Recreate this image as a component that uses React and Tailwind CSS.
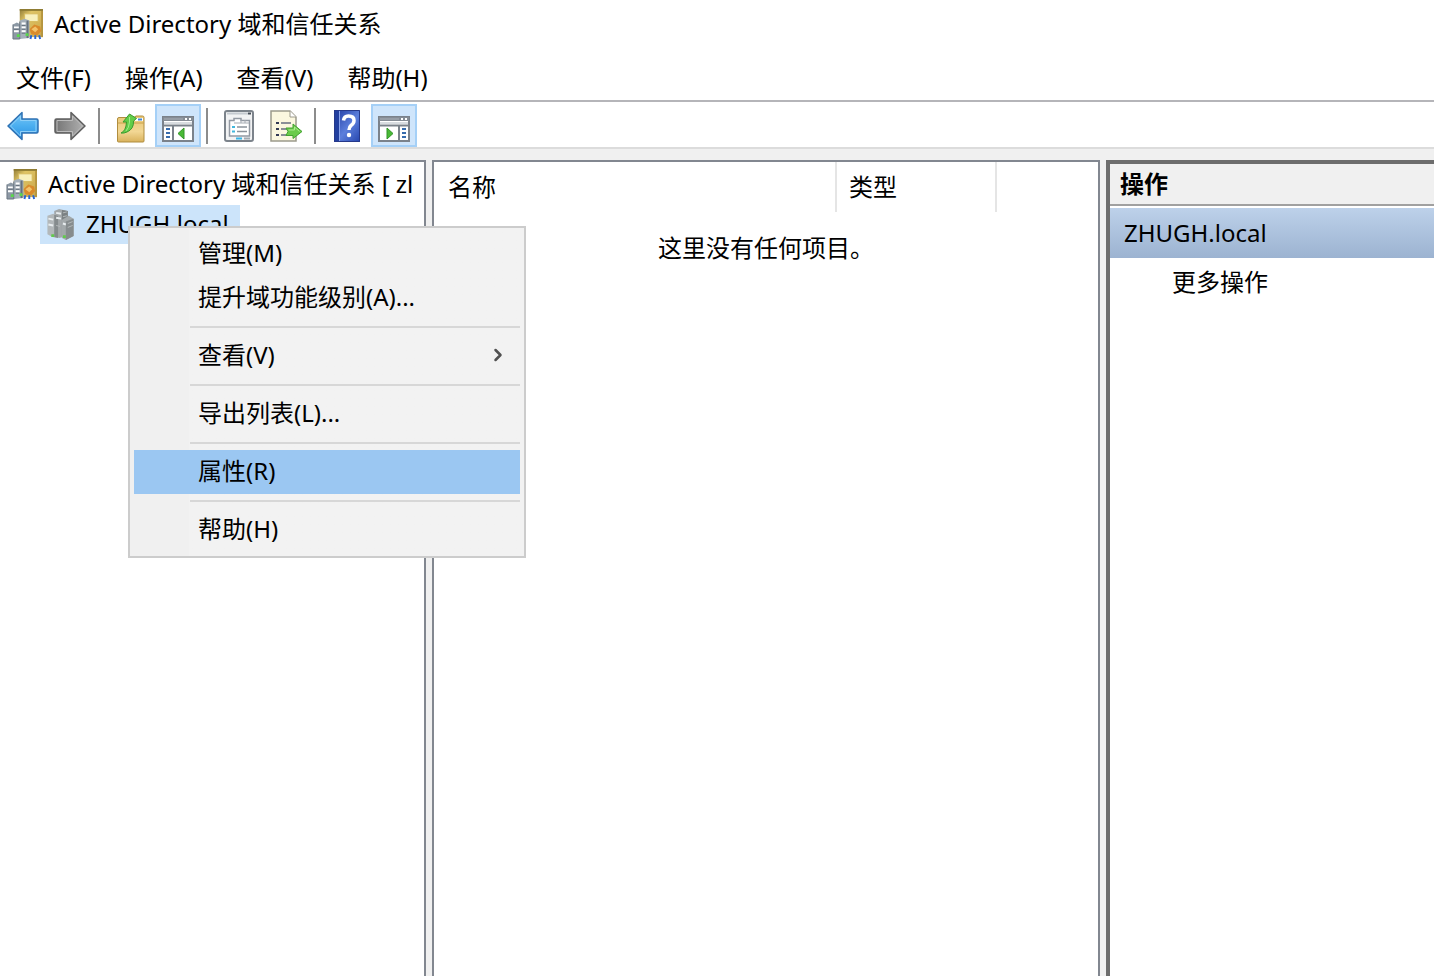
import { ChevronRight } from 'lucide-react';
import clsx from 'clsx';

const menus = ['文件(F)', '操作(A)', '查看(V)', '帮助(H)'];

const contextItems = [
    { label: '管理(M)' },
    { label: '提升域功能级别(A)...' },
    { separator: true },
    { label: '查看(V)', submenu: true },
    { separator: true },
    { label: '导出列表(L)...' },
    { separator: true },
    { label: '属性(R)', active: true },
    { separator: true },
    { label: '帮助(H)' },
];

function DirectoryIcon() {
    return (
        <svg viewBox="0 0 33 33" className="size-8 shrink-0" aria-hidden="true">
            <defs>
                <linearGradient id="book" x1="0" y1="0" x2="1" y2="1">
                    <stop offset="0" stopColor="#8f7a35" />
                    <stop offset="0.3" stopColor="#dfc465" />
                    <stop offset="1" stopColor="#c9a548" />
                </linearGradient>
            </defs>
            <path d="M8 1H32V30H8Z" fill="url(#book)" />
            <path d="M8 1H32V3H8Z" fill="#8f7c33" />
            <path d="M30 3h2v27h-2Z" fill="#b5953f" />
            <path d="M13 6h14v8H13Z" fill="#f8f0bd" stroke="#d6ba5c" />
            <path d="M18 22l5-5 6 2 1 5-4 4-6-1z" fill="#d98a2b" />
            <path d="M20 22l4-3 3 3-3 3z" fill="#f2c26a" />
            <path d="M20 28l-1 4M24 28v4M28 28l1 4" fill="none" stroke="#2563d4" strokeWidth="2" />
            <path d="M1 17l4-2 4 2v15H1z" fill="#8d99a5" />
            <path d="M8 13l5-2 5 2v18l-10 1z" fill="#a4afb9" />
            <path d="M16 13v18" stroke="#66727e" strokeWidth="2" />
            <path d="M2 20h5M2 24h5M10 16h4M10 20h4M10 24h4" stroke="#fff" strokeWidth="2" />
            <path d="M2 22h5M10 18h4M10 22h4M10 26h4" stroke="#65717d" />
            <path d="M1 17v15h7v-18" fill="none" stroke="#68747f" />
            <path d="M5 27h3v3H5zM14 26h3v3h-3z" fill="#59d84b" />
        </svg>
    );
}

function DomainIcon() {
    return (
        <svg viewBox="0 0 30 33" className="h-8 w-[30px] shrink-0" aria-hidden="true">
            <path d="M8 3l5-2 9 2v26l-9 2-5-3z" fill="#a3a8aa" />
            <path d="M16 2l6 1v26h-6z" fill="#7b8183" />
            <path d="M1 8l6-2 5 2v23l-6-1-5-3z" fill="#b3b8ba" />
            <path d="M8 7l4 1v23l-4-1z" fill="#858b8d" />
            <path d="M16 12l7-4 5 3v18l-8 4-4-2z" fill="#a3a9ab" />
            <path d="M20 14l8-3v18l-8 4z" fill="#868c8e" />
            <path d="M10 5l5 1M10 10l5 1M2 11l5 1M2 17l5 1M17 16l3 1" stroke="#e8edef" strokeWidth="2" />
            <path d="M17 5l4-1M17 9l4-1M22 16l5-2M22 20l5-2M10 18l4 1" stroke="#b5babb" />
            <path d="M5 27h3v3H5zM17 28h3v3h-3z" fill="#61c94d" />
        </svg>
    );
}

function ArrowIcon({ forward }) {
    return (
        <svg viewBox="0 0 32 30" className="h-[30px] w-8" aria-hidden="true">
            <defs>
                <linearGradient id="blueArrow" x1="0" y1="0" x2="0" y2="1">
                    <stop offset="0" stopColor="#7cc8f5" />
                    <stop offset="0.5" stopColor="#4aaef0" />
                    <stop offset="1" stopColor="#2c8fe0" />
                </linearGradient>
                <linearGradient id="grayArrow" x1="0" y1="0" x2="1" y2="0">
                    <stop offset="0" stopColor="#747474" />
                    <stop offset="1" stopColor="#b2b2b2" />
                </linearGradient>
            </defs>
            {forward ? (
                <>
                    <path d="M31 15L17 1.5V8H2.5Q1 8 1 9.5V20.5Q1 22 2.5 22H17V28.5Z" fill="url(#grayArrow)" stroke="#5f5f5f" strokeWidth="1.5" strokeLinejoin="round" />
                    <path d="M28.5 15L18.5 5V9.5H3V20.5H18.5V25Z" fill="none" stroke="#bcbcbc" />
                </>
            ) : (
                <>
                    <path d="M1 15L15 1.5V8H29.5Q31 8 31 9.5V20.5Q31 22 29.5 22H15V28.5Z" fill="url(#blueArrow)" stroke="#2f72b4" strokeWidth="1.5" strokeLinejoin="round" />
                    <path d="M3.5 15L13.5 5V9.5H29V20.5H13.5V25Z" fill="none" stroke="#8fd0f8" />
                </>
            )}
        </svg>
    );
}

function FolderUpIcon() {
    return (
        <svg viewBox="0 0 30 30" className="mt-1 size-[30px]" aria-hidden="true">
            <defs>
                <linearGradient id="folder" x1="0" y1="0" x2="0" y2="1">
                    <stop offset="0" stopColor="#e9c777" />
                    <stop offset="0.6" stopColor="#f2d794" />
                    <stop offset="1" stopColor="#d9b25c" />
                </linearGradient>
            </defs>
            <path d="M1.5 6q0-1.5 1.5-1.5H18l2-1.5h6.5q1.5 0 1.5 1.5V28q0 1-1 1H2.5q-1 0-1-1z" fill="url(#folder)" stroke="#b08d3e" />
            <path d="M19 5h8v3h-8z" fill="#fff" />
            <path d="M22 6.5h4" stroke="#3f86d8" strokeWidth="2" />
            <path d="M2 10h26" stroke="#c9a24a" />
            <path d="M5 20Q10 18 10.5 9H7L13.5 1L20.5 5.500L17.500 8Q18 16 11 19Q8 20.500 5 20Z" fill="#62cd49" stroke="#3b9a2e" strokeLinejoin="round" />
            <path d="M13.5 4v5Q13 15 10 18" fill="none" stroke="#a1eb8a" />
        </svg>
    );
}

// Console window with the tree pane on the left, or the action pane on the right
function PaneIcon({ right }) {
    return (
        <svg viewBox="0 0 32 26" className="mt-1.5 h-[26px] w-8" aria-hidden="true">
            <path d="M1 1h30v24H1z" fill="#fff" stroke="#7b828b" strokeWidth="2" />
            <path d="M1 1h30v4H1z" fill="#858c95" />
            <path d="M2 3h19" stroke="#aab0b8" />
            <path d="M23 3h2M27 3h2" stroke="#fff" strokeWidth="2" />
            <path d="M2 7h28" stroke="#d8dce0" strokeWidth="2" />
            <path d="M1 9.5h30" stroke="#7b828b" strokeWidth="2" />
            {right ? (
                <>
                    <path d="M21 9v16" stroke="#7b828b" strokeWidth="2" />
                    <path d="M24 13h4M24 17h4M24 21h4" stroke="#376cae" strokeWidth="2" />
                    <path d="M9 12l6 5.5L9 23z" fill="#49b936" stroke="#319426" />
                </>
            ) : (
                <>
                    <path d="M11 9v16" stroke="#7b828b" strokeWidth="2" />
                    <path d="M4 13h4M4 17h4M4 21h4" stroke="#376cae" strokeWidth="2" />
                    <path d="M22 12l-6 5.5 6 5.5z" fill="#49b936" stroke="#319426" />
                </>
            )}
        </svg>
    );
}

function PropertiesIcon() {
    return (
        <svg viewBox="0 0 30 32" className="h-8 w-[30px]" aria-hidden="true">
            <rect x="1" y="1" width="28" height="30" rx="2" fill="#f2f3f4" stroke="#7c838b" strokeWidth="2" />
            <path d="M3 3.5h21" stroke="#c5cad0" strokeWidth="2" />
            <path d="M24 3.5h3" stroke="#464e58" strokeWidth="2" />
            <path d="M5.5 26V10.5H10V8.5h7v2h8.500V26z" fill="#fff" stroke="#9299a2" strokeWidth="1.5" />
            <path d="M10 13h15M17 10v3M21 10v3" stroke="#a5abb2" />
            <path d="M8 17h3M8 21.5h3" stroke="#42b8dd" strokeWidth="2" />
            <path d="M13 17h10M13 21.5h10" stroke="#8b929a" strokeWidth="1.5" />
            <path d="M12 28.5h6" stroke="#39b5e6" strokeWidth="2" />
            <path d="M20 28.5h6" stroke="#a2a9b1" strokeWidth="2" />
        </svg>
    );
}

function ExportListIcon() {
    return (
        <svg viewBox="0 0 33 32" className="h-8 w-[33px]" aria-hidden="true">
            <path d="M1 1h19l6 6v24H1z" fill="#fbf7df" stroke="#9c9a8c" strokeWidth="1.5" />
            <path d="M20 1v6h6" fill="#fff" stroke="#9c9a8c" />
            <path d="M6 13h3M6 19h3M6 25h3" stroke="#333a55" strokeWidth="2" />
            <path d="M11 13h10M11 19h6M11 25h7" stroke="#676d80" strokeWidth="1.5" />
            <path d="M16 18h7V14l9 7.500-9 7V25.500h-7l2-4z" fill="#6bcb4b" stroke="#43a331" strokeLinejoin="round" />
            <path d="M18.5 20h6v-3l5 4.500" fill="none" stroke="#aceb8f" />
        </svg>
    );
}

function HelpIcon() {
    return (
        <svg viewBox="0 0 26 32" className="h-8 w-[26px]" aria-hidden="true">
            <defs>
                <linearGradient id="help" x1="0" y1="0" x2="1" y2="1">
                    <stop offset="0" stopColor="#1f3aa0" />
                    <stop offset="0.55" stopColor="#5c7fdc" />
                    <stop offset="1" stopColor="#2444ad" />
                </linearGradient>
            </defs>
            <path d="M0 0h26v32H0z" fill="url(#help)" />
            <path d="M0 0h5v32H0z" fill="#223f9f" />
            <path d="M5.5 0v32" stroke="#8ba5ec" />
            <path d="M0.5 0.5h25v31H0.5z" fill="none" stroke="#26398a" />
            <path d="M9.5 10.5Q10 6 14.5 6Q20 6 20 10.5Q20 13.5 17 15.5Q15 17 15 20" fill="none" stroke="#fff" strokeWidth="3.5" />
            <circle cx="15" cy="25" r="2.2" fill="#fff" />
        </svg>
    );
}

function ToolButton({ label, pressed, children }) {
    return (
        <button
            type="button"
            aria-label={label}
            className={clsx(
                'flex h-[43px] w-[46px] items-center justify-center border-2',
                pressed ? 'border-[#a5d0f7] bg-[#cfe5fb]' : 'border-transparent'
            )}
        >
            {children}
        </button>
    );
}

function ToolSeparator() {
    return <span className="mr-[7px] ml-1 h-9 w-0.5 bg-[#8c8c8c]" />;
}

function ContextMenu() {
    return (
        <div role="menu" className="absolute top-[21px] left-[88px] z-10 w-[398px] border-2 border-[#cccccc] bg-[#f2f2f2] bg-linear-to-r from-[#f0f0f0] from-15% to-[#f2f2f2] to-15% p-1">
            {contextItems.map((item, i) =>
                item.separator ? (
                    <div key={i} role="separator" className="ml-14 flex h-3.5 items-center">
                        <span className="h-0.5 w-full bg-[#d7d7d7]" />
                    </div>
                ) : (
                    <button
                        key={i}
                        type="button"
                        role="menuitem"
                        className={clsx('flex h-11 w-full items-center justify-between pr-3 pb-0.5 pl-16', item.active && 'bg-[#9bc7f2]')}
                    >
                        {item.label}
                        {item.submenu && <ChevronRight strokeWidth={3} className="size-5 text-[#505050]" />}
                    </button>
                )
            )}
        </div>
    );
}

export default function App() {
    return (
        <div className="flex min-h-screen flex-col bg-[#f0f0f0] font-['Noto_Sans','Noto_Sans_CJK_SC',sans-serif] text-2xl/8 whitespace-nowrap text-black">
            <header className="bg-white">
                <div className="flex h-12 items-center gap-2.5 pl-3">
                    <DirectoryIcon />
                    <h1>Active Directory 域和信任关系</h1>
                </div>
                <nav className="flex h-[52px] items-center gap-[34px] px-4 pt-2">
                    {menus.map((menu) => (
                        <button key={menu} type="button">{menu}</button>
                    ))}
                </nav>
            </header>

            <div className="flex items-center gap-px border-y-2 border-t-[#b5b5b9] border-b-[#dcdcdc] bg-white pt-0.5">
                <ToolButton label="后退"><ArrowIcon /></ToolButton>
                <ToolButton label="前进"><ArrowIcon forward /></ToolButton>
                <ToolSeparator />
                <ToolButton label="上一级"><FolderUpIcon /></ToolButton>
                <ToolButton label="显示/隐藏控制台树" pressed><PaneIcon /></ToolButton>
                <ToolSeparator />
                <ToolButton label="属性"><PropertiesIcon /></ToolButton>
                <ToolButton label="导出列表"><ExportListIcon /></ToolButton>
                <ToolSeparator />
                <ToolButton label="帮助"><HelpIcon /></ToolButton>
                <ToolButton label="显示/隐藏操作窗格" pressed><PaneIcon right /></ToolButton>
            </div>

            <main className="flex flex-1 gap-1.5 pt-[11px]">
                <section className="w-[426px] shrink-0 border-t-2 border-r-2 border-[#828790] bg-white">
                    <div className="flex h-[43px] items-center gap-2.5 overflow-hidden pl-1.5">
                        <DirectoryIcon />
                        <span>Active Directory 域和信任关系 [ zl</span>
                    </div>
                    <div className="relative ml-10">
                        <button type="button" className="flex h-[39px] w-[200px] items-center gap-2.5 bg-[#cce4fa] pb-0.5 pl-1.5">
                            <DomainIcon />
                            <span>ZHUGH.local</span>
                        </button>
                        <ContextMenu />
                    </div>
                </section>

                <section className="min-w-0 flex-1 border-2 border-b-0 border-[#828790] bg-white">
                    <table className="w-full table-fixed">
                        <thead>
                            <tr className="h-[50px] text-left">
                                <th className="w-[402px] border-r-2 border-[#e5e5e5] pl-3.5 font-normal">名称</th>
                                <th className="w-40 border-r-2 border-[#e5e5e5] pl-3 font-normal">类型</th>
                                <th />
                            </tr>
                        </thead>
                        <tbody>
                            <tr>
                                <td colSpan="3" className="pt-5 text-center">这里没有任何项目。</td>
                            </tr>
                        </tbody>
                    </table>
                </section>

                <aside className="w-[328px] shrink-0 border-t-4 border-l-4 border-[#6d6d6d] bg-white">
                    <h2 className="flex h-[42px] items-center border-b-2 border-[#a0a0a0] bg-[#f0f0f0] pl-2.5 font-bold">操作</h2>
                    <div className="mt-0.5 flex h-[50px] items-center bg-linear-to-b from-[#bdd1ea] to-[#9cb3d1] pl-3.5">ZHUGH.local</div>
                    <button type="button" className="flex h-12 w-full items-center pl-[62px]">更多操作</button>
                </aside>
            </main>
        </div>
    );
}
